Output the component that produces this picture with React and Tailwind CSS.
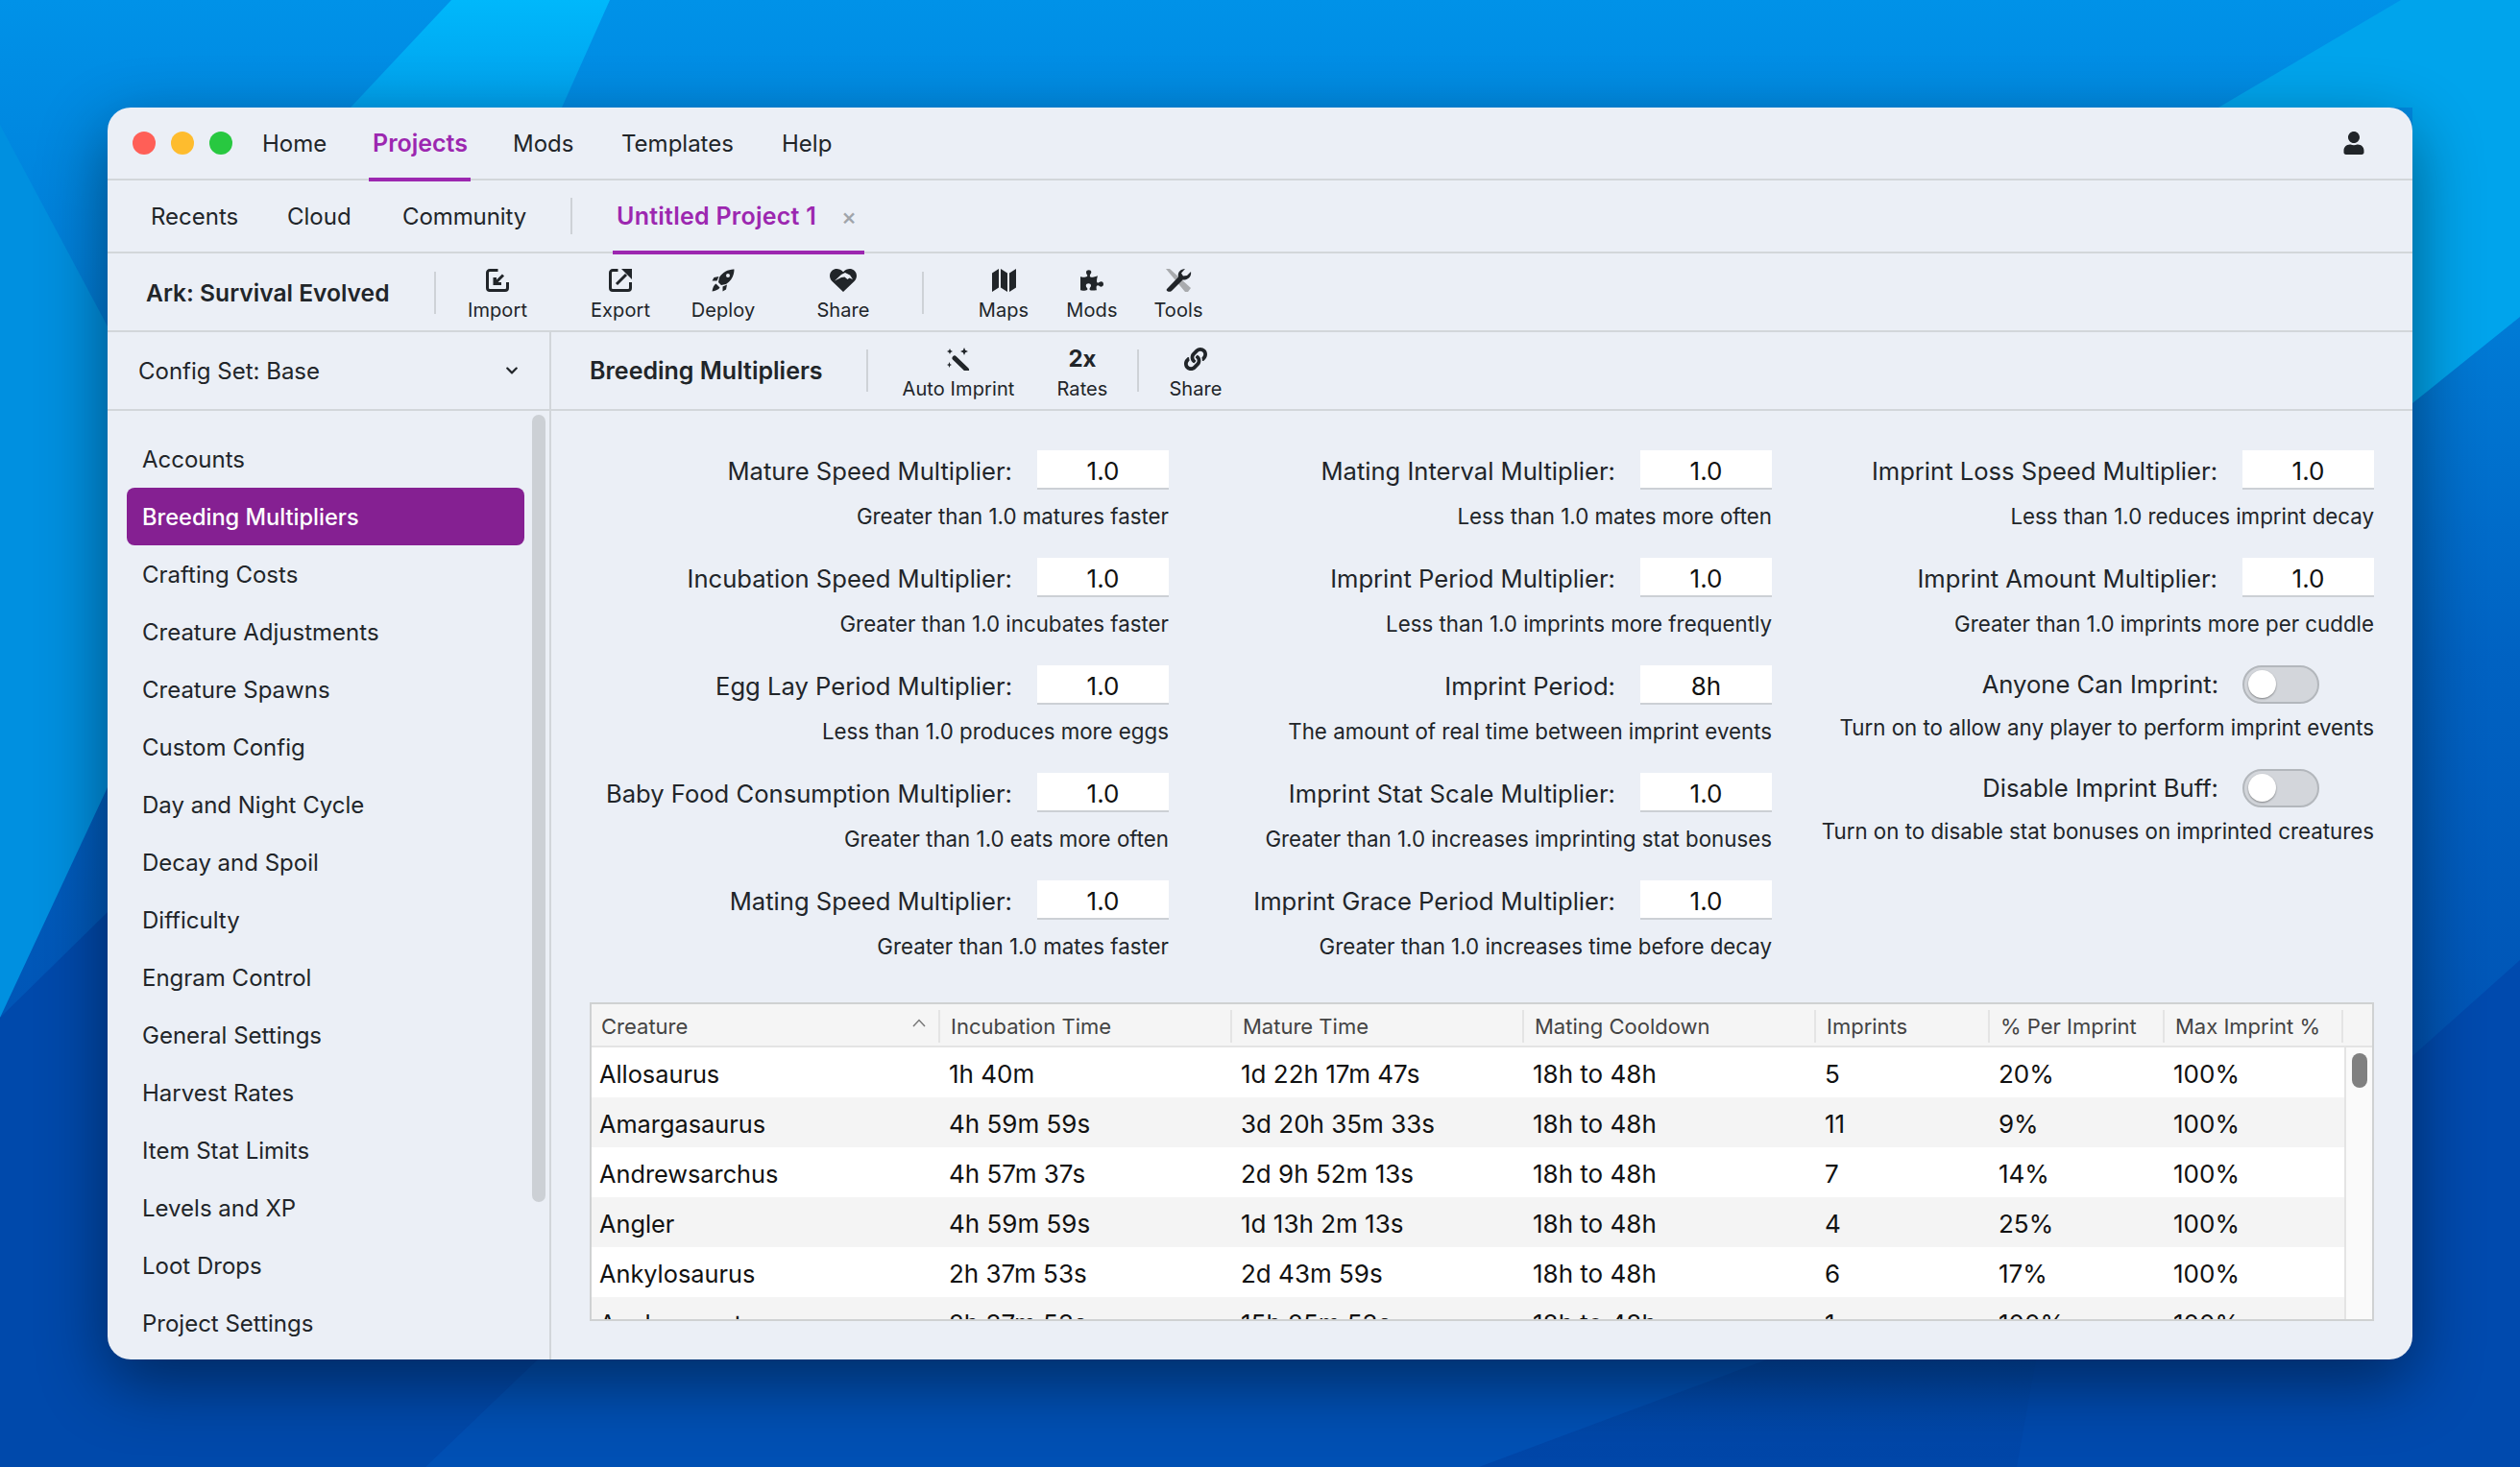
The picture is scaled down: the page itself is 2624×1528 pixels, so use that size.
import React from "react";
import { FaPuzzlePiece, FaUser, FaLink, FaChevronDown } from "react-icons/fa";

const ImportIcon = () => (
  <svg width="24" height="24" viewBox="0 0 24 24" fill="none" stroke="#212529" strokeLinecap="butt">
    <path d="M12.5 1.5H4A2.5 2.5 0 0 0 1.500 4V20A2.500 2.500 0 0 0 4 22.500H20A2.500 2.500 0 0 0 22.500 20V14" strokeWidth="3" />
    <path d="M18 6.500L10 14.500" strokeWidth="3" />
    <path d="M7.500 9V17H16V14H11V9Z" fill="#212529" stroke="none" />
  </svg>
);
const ExportIcon = () => (
  <svg width="24" height="24" viewBox="0 0 24 24" fill="none" stroke="#212529">
    <path d="M9.500 1.500H4A2.500 2.500 0 0 0 1.500 4V20A2.500 2.500 0 0 0 4 22.500H20A2.500 2.500 0 0 0 22.500 20V14" strokeWidth="3" />
    <path d="M8 16L18 6" strokeWidth="3" />
    <path d="M13 0H24V11L20 7L17 4Z" fill="#212529" stroke="none" />
  </svg>
);
const RocketIcon = () => (
  <svg width="24" height="24" viewBox="0 0 24 24" fill="#212529">
    <path fillRule="evenodd" d="M23.500 0.500C17 0.500 11.500 3.500 8 9L7 14L10 17L15 16C20.500 12.500 23.500 7 23.500 0.500ZM17 5A2 2 0 1 1 17 9A2 2 0 1 1 17 5Z" />
    <path d="M7.500 8L2.500 9L0.500 12.500H5.500Z" />
    <path d="M16 16.500L15 21.500L11.500 23.500V18.500Z" />
    <path d="M4.500 15.500C2.500 16.500 1 20 0.500 23.500C4 23 7.500 21.500 8.500 19.500Z" />
  </svg>
);
const HeartIcon = () => (
  <svg width="28" height="24" viewBox="0 0 28 24">
    <path d="M14 24L2.500 13C-0.800 9.800 -0.800 4.500 2.500 1.800C5.800 -0.900 10.500 -0.300 14 3.300C17.500 -0.300 22.200 -0.900 25.500 1.800C28.800 4.500 28.800 9.800 25.500 13Z" fill="#212529" />
    <path d="M5 12.500L12 6L16 4L21 6.500L24 11L20.500 9.500L18.500 11L15.500 8.500L12 9Z" fill="#ebeff6" />
  </svg>
);
const WrenchIcon = () => (
  <svg width="28" height="24" viewBox="0 0 28 24">
    <path d="M1 0H5L27 20L24 24H21Z" fill="#a9abae" />
    <path d="M2 21L14 8.500C13 4 15.500 0.500 21 0L17 4.500L19 7.500L23 7L27 3C28 8 24 12 18.500 11.500L7 23C4.500 25 0.500 23 2 21Z" fill="#212529" />
  </svg>
);
const MapIcon = () => (
  <svg width="25" height="24" viewBox="0 0 25 24" fill="#212529">
    <path d="M0 4.500L7 0V19.500L0 24Z" />
    <path d="M9 0L16 4.500V24L9 19.500Z" />
    <path d="M18 4.500L25 0V19.500L18 24Z" />
  </svg>
);
const WandIcon = () => (
  <svg width="24" height="24" viewBox="0 0 24 24" fill="#212529">
    <path d="M8 11L20.500 23" stroke="#212529" strokeWidth="5" strokeLinecap="round" />
    <path d="M3 1L3.900 3.100L6 4L3.900 4.900L3 7L2.100 4.900L0 4L2.100 3.100Z" />
    <path d="M18 0L19.200 2.800L22 4L19.200 5.200L18 8L16.800 5.200L14 4L16.800 2.800Z" />
    <path d="M2.500 15L3.300 17.200L5 18L3.300 18.800L2.500 21L1.700 18.800L0 18L1.700 17.200Z" />
  </svg>
);

const Tool = ({ icon, label, className }) => (
  <div className={"flex flex-col items-center shrink-0 " + className}>
    <div className="h-[24px] flex items-center justify-center">{icon}</div>
    <div className="mt-[7px] text-[20px] tracking-[0.1px] leading-[24px] text-[#212529] whitespace-nowrap">{label}</div>
  </div>
);

const Sep = ({ h = "h-[44px]", className = "" }) => <div className={"w-[2px] bg-[#ced2d7] shrink-0 " + h + " " + className} />;

const sidebar = ["Accounts","Breeding Multipliers","Crafting Costs","Creature Adjustments","Creature Spawns","Custom Config","Day and Night Cycle","Decay and Spoil","Difficulty","Engram Control","General Settings","Harvest Rates","Item Stat Limits","Levels and XP","Loot Drops","Project Settings"];

const col1 = [
  ["Mature Speed Multiplier:","1.0","Greater than 1.0 matures faster"],
  ["Incubation Speed Multiplier:","1.0","Greater than 1.0 incubates faster"],
  ["Egg Lay Period Multiplier:","1.0","Less than 1.0 produces more eggs"],
  ["Baby Food Consumption Multiplier:","1.0","Greater than 1.0 eats more often"],
  ["Mating Speed Multiplier:","1.0","Greater than 1.0 mates faster"],
];
const col2 = [
  ["Mating Interval Multiplier:","1.0","Less than 1.0 mates more often"],
  ["Imprint Period Multiplier:","1.0","Less than 1.0 imprints more frequently"],
  ["Imprint Period:","8h","The amount of real time between imprint events"],
  ["Imprint Stat Scale Multiplier:","1.0","Greater than 1.0 increases imprinting stat bonuses"],
  ["Imprint Grace Period Multiplier:","1.0","Greater than 1.0 increases time before decay"],
];
const col3 = [
  ["Imprint Loss Speed Multiplier:","1.0","Less than 1.0 reduces imprint decay"],
  ["Imprint Amount Multiplier:","1.0","Greater than 1.0 imprints more per cuddle"],
];

const Field = ({ label, value, hint }) => (
  <div className="h-[112px] flex flex-col items-end">
    <div className="flex items-center h-[41px]">
      <span className="text-[25.6px] pt-[3px] text-[#212529] whitespace-nowrap">{label}</span>
      <div className="ml-[26px] w-[137px] h-[41px] bg-white border-b-2 border-[#ccd0d5] flex items-center justify-center text-[26px] pt-[3px] text-[#111]">{value}</div>
    </div>
    <div className="mt-[14px] h-[28px] leading-[28px] text-[22.3px] text-[#212529] whitespace-nowrap">{hint}</div>
  </div>
);

const ToggleField = ({ label, hint }) => (
  <div className="h-[108px] flex flex-col items-end">
    <div className="flex items-center h-[40px] pr-[57px]">
      <span className="text-[25.6px] text-[#212529] whitespace-nowrap">{label}</span>
      <div className="ml-[25px] w-[80px] h-[40px] rounded-full bg-[#d3d6db] border-2 border-[#b3b7bc] relative shrink-0">
        <div className="absolute left-[4px] top-[3px] w-[29px] h-[29px] rounded-full bg-white shadow-[0_1px_2px_rgba(0,0,0,0.4)]" />
      </div>
    </div>
    <div className="mt-[11px] h-[28px] leading-[28px] text-[22.3px] text-[#212529] whitespace-nowrap">{hint}</div>
  </div>
);

const headers = ["Creature","Incubation Time","Mature Time","Mating Cooldown","Imprints","% Per Imprint","Max Imprint %"];
const rows = [
  ["Allosaurus","1h 40m","1d 22h 17m 47s","18h to 48h","5","20%","100%"],
  ["Amargasaurus","4h 59m 59s","3d 20h 35m 33s","18h to 48h","11","9%","100%"],
  ["Andrewsarchus","4h 57m 37s","2d 9h 52m 13s","18h to 48h","7","14%","100%"],
  ["Angler","4h 59m 59s","1d 13h 2m 13s","18h to 48h","4","25%","100%"],
  ["Ankylosaurus","2h 37m 53s","2d 43m 59s","18h to 48h","6","17%","100%"],
  ["Anokomesater","2h 37m 53s","15h 25m 53s","18h to 48h","1","100%","100%"],
];
const grid = "grid grid-cols-[363px_304px_304px_304px_181px_182px_186px]";

export default function App() {
  return (
    <div className="relative w-[2624px] h-[1528px] overflow-hidden font-['Inter',sans-serif] bg-[#0068c8]">
      <svg className="absolute inset-0" width="2624" height="1528" viewBox="0 0 2624 1528">
        <defs>
          <linearGradient id="bg" x1="0" y1="0" x2="0" y2="1">
            <stop offset="0" stopColor="#0092e8" />
            <stop offset="0.45" stopColor="#0062c2" />
            <stop offset="1" stopColor="#0046a8" />
          </linearGradient>
          <linearGradient id="cy" x1="0" y1="0" x2="0" y2="1">
            <stop offset="0" stopColor="#00b8fb" />
            <stop offset="1" stopColor="#00a0ec" />
          </linearGradient>
        </defs>
        <rect width="2624" height="1528" fill="url(#bg)" />
        <polygon points="365,112 470,0 635,0 585,112" fill="url(#cy)" />
        <polygon points="0,130 112,340 112,820 0,1060" fill="#0090e0" />
        <polygon points="0,1060 112,950 560,1416 443,1528 0,1528" fill="#0049ab" />
        <polygon points="2310,112 2500,0 2624,0 2624,330 2512,420 2512,112" fill="#00a4ec" />
        <polygon points="2512,1100 2624,1000 2624,1528 2100,1528 2120,1416" fill="#004aae" />
        <polygon points="560,1416 1840,1416 1540,1528 443,1528" fill="#0050b4" />
      </svg>
      <div className="relative m-[112px] w-[2400px] h-[1304px] rounded-[24px] bg-[#ebeff6] overflow-hidden flex flex-col shadow-[0_24px_70px_rgba(0,0,0,0.45)]">
        {/* nav */}
        <div className="h-[76px] shrink-0 border-b-2 border-[#d2d6da] flex items-center pl-[26px] pr-[49px] text-[24px] text-[#212529]">
          <div className="w-[24px] h-[24px] rounded-full bg-[#ff5f57]" />
          <div className="w-[24px] h-[24px] rounded-full bg-[#febc2e] ml-[16px]" />
          <div className="w-[24px] h-[24px] rounded-full bg-[#28c840] ml-[16px]" />
          <span className="ml-[31px] w-[115px] pt-[2px]">Home</span>
          <div className="w-[146px] h-[76px] relative flex items-center">
            <span className="text-[#9c27b0] font-semibold text-[25px] pt-[2px]">Projects</span>
            <div className="absolute left-[-4px] bottom-[-2px] w-[106px] h-[4px] bg-[#9c27b0]" />
          </div>
          <span className="w-[113px] pt-[2px]">Mods</span>
          <span className="w-[167px] pt-[2px]">Templates</span>
          <span className="pt-[2px]">Help</span>
          <FaUser className="ml-auto text-[#212529]" size={24} />
        </div>
        {/* tabs */}
        <div className="h-[76px] shrink-0 border-b-2 border-[#d2d6da] flex items-center pl-[45px] text-[24px] text-[#212529]">
          <span className="w-[142px] pt-[2px]">Recents</span>
          <span className="w-[120px] pt-[2px]">Cloud</span>
          <span className="w-[175px] pt-[2px] tracking-[-0.1px]">Community</span>
          <Sep h="h-[38px]" />
          <div className="ml-[46px] h-[76px] relative flex items-center">
            <span className="text-[#9c27b0] font-semibold text-[25px] tracking-[0.25px] pt-[2px]">Untitled Project 1</span>
            <span className="ml-[26px] text-[24px] font-medium text-[#a0a4aa] pt-[2px]">×</span>
            <div className="absolute left-[-4px] bottom-[-2px] w-[262px] h-[4px] bg-[#9c27b0]" />
          </div>
        </div>
        {/* toolbar */}
        <div className="h-[82px] shrink-0 border-b-2 border-[#d2d6da] flex items-center pl-[40px] pt-[2px]">
          <span className="font-semibold text-[24.6px] text-[#212529] w-[300px] whitespace-nowrap">Ark: Survival Evolved</span>
          <Sep />
          <div className="flex items-start h-[54px] ml-[2px] pt-[2px]">
            <Tool icon={<ImportIcon />} label="Import" className="w-[124px]" />
            <Tool icon={<ExportIcon />} label="Export" className="w-[130px] ml-[1px]" />
            <Tool icon={<RocketIcon />} label="Deploy" className="w-[84px]" />
            <Tool icon={<HeartIcon />} label="Share" className="w-[84px] ml-[41px]" />
          </div>
          <Sep className="ml-[40px]" />
          <div className="flex items-start h-[54px] pt-[2px]">
            <Tool icon={<MapIcon />} label="Maps" className="w-[80px] ml-[43px]" />
            <Tool icon={<FaPuzzlePiece size={24} color="#212529" />} label="Mods" className="w-[80px] ml-[12px]" />
            <Tool icon={<WrenchIcon />} label="Tools" className="w-[80px] ml-[10px]" />
          </div>
        </div>
        {/* body */}
        <div className="flex-1 flex min-h-0">
          {/* left */}
          <div className="w-[460px] shrink-0 flex flex-col">
            <div className="h-[82px] shrink-0 border-b-2 border-[#d2d6da] flex items-center pl-[32px] pr-[32px] text-[24px] text-[#212529]">
              <span className="pt-[2px]">Config Set: Base</span>
              <FaChevronDown className="ml-auto" size={14} />
            </div>
            <div className="flex-1 relative pt-[20px] pl-[20px] overflow-hidden">
              {sidebar.map((s) => (
                <div key={s} className={"w-[414px] h-[60px] rounded-[8px] flex items-center pl-[16px] pt-[2px] " + (s === "Breeding Multipliers" ? "bg-[#852092] text-white font-medium text-[23.6px]" : "text-[#212529] text-[24px]")}>{s}</div>
              ))}
              <div className="absolute left-[442px] top-[4px] w-[14px] h-[820px] rounded-full bg-[#ccd0d5]" />
            </div>
          </div>
          <div className="w-[2px] bg-[#d2d6da] shrink-0" />
          {/* right */}
          <div className="flex-1 min-w-0 flex flex-col">
            <div className="h-[82px] shrink-0 border-b-2 border-[#d2d6da] flex items-center pl-[40px]">
              <span className="font-semibold text-[25px] pt-[2px] text-[#212529] w-[288px] whitespace-nowrap">Breeding Multipliers</span>
              <Sep />
              <div className="flex items-start h-[64px] pt-[8px]">
                <Tool icon={<WandIcon />} label="Auto Imprint" className="w-[120px] ml-[34px]" />
                <Tool icon={<span className="font-bold text-[24px] leading-[24px] text-[#212529]">2x</span>} label="Rates" className="w-[60px] ml-[39px]" />
              </div>
              <Sep className="ml-[27px]" />
              <div className="flex items-start h-[64px] pt-[8px]">
                <Tool icon={<FaLink size={24} color="#212529" />} label="Share" className="w-[60px] ml-[29px]" />
              </div>
            </div>
            <div className="flex-1 pl-[40px] pt-[41px] flex flex-col min-h-0">
              <div className="grid grid-cols-[603px_628px_627px] h-[575px]">
                <div>{col1.map((f) => <Field key={f[0]} label={f[0]} value={f[1]} hint={f[2]} />)}</div>
                <div>{col2.map((f) => <Field key={f[0]} label={f[0]} value={f[1]} hint={f[2]} />)}</div>
                <div>
                  {col3.map((f) => <Field key={f[0]} label={f[0]} value={f[1]} hint={f[2]} />)}
                  <ToggleField label="Anyone Can Imprint:" hint="Turn on to allow any player to perform imprint events" />
                  <ToggleField label="Disable Imprint Buff:" hint="Turn on to disable stat bonuses on imprinted creatures" />
                </div>
              </div>
              <div className="w-[1858px] h-[332px] border-2 border-[#cfd1d2] bg-white overflow-hidden relative">
                <div className={grid + " h-[45px] bg-[#f5f5f5] border-b-2 border-[#e4e4e4]"}>
                  {headers.map((h, i) => (
                    <div key={h} className={"relative flex items-center pt-[3px] text-[22px] text-[#444] " + (i === 0 ? "pl-[10px]" : "pl-[11px]")}>
                      {h}
                      {i === 0 && (
                        <svg className="absolute right-[15px] top-[15px]" width="14" height="9" viewBox="0 0 14 9" fill="none" stroke="#777" strokeWidth="1.500"><path d="M1 8L7 1.500L13 8" /></svg>
                      )}
                      <div className="absolute right-0 top-[6px] h-[34px] w-[2px] bg-[#e4e4e4]" />
                    </div>
                  ))}
                </div>
                {rows.map((r, i) => (
                  <div key={r[0]} className={grid + " h-[52px] " + (i % 2 ? "bg-[#f4f4f4]" : "bg-white")}>
                    {r.map((c, j) => (
                      <div key={j} className={"flex items-center pt-[3px] text-[#111] whitespace-nowrap " + (j === 0 ? "pl-[8px] text-[25.3px]" : "pl-[9px] text-[26px]")}>{c}</div>
                    ))}
                  </div>
                ))}
                <div className="absolute right-0 top-[45px] bottom-0 w-[29px] bg-[#fafafa] border-l-2 border-[#e4e4e4]">
                  <div className="absolute left-[6px] top-[6px] w-[16px] h-[36px] rounded-full bg-[#808080]" />
                </div>
              </div>
            </div>
          </div>
        </div>
      </div>
    </div>
  );
}
